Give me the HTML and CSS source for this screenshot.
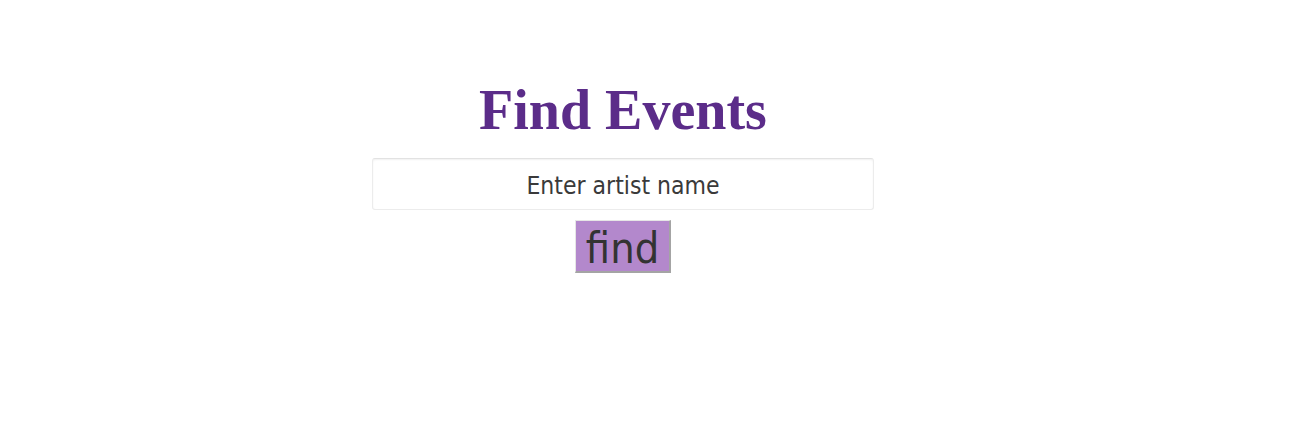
FILE: index.html
```html
<!DOCTYPE html>
<html lang="en">
<head>
<meta charset="utf-8">
<title>Find Events</title>
<link rel="stylesheet" href="styles.css">
</head>
<body>
<main class="page">
  <h1 class="title">Find Events</h1>
  <form class="search">
    <input class="artist" type="text" placeholder="Enter artist name">
    <button class="find" type="button">find</button>
  </form>
</main>
</body>
</html>
```
FILE: styles.css
```css
html, body {
  margin: 0;
  padding: 0;
  background: #ffffff;
}

.page {
  width: 1246px;
  display: flex;
  flex-direction: column;
  align-items: center;
  padding-top: 78px;
}

.title {
  margin: 0;
  font-family: "Liberation Serif", serif;
  font-weight: bold;
  font-size: 56px;
  line-height: 64px;
  color: #5b2c89;
}

.search {
  margin-top: 16px;
  display: flex;
  flex-direction: column;
  align-items: center;
  gap: 10px;
}

.artist {
  box-sizing: border-box;
  width: 502px;
  height: 52px;
  margin: 0;
  padding: 2px 10px 0;
  border: 1px solid #ececec;
  border-top-color: #e2e2e2;
  border-radius: 3px;
  box-shadow: inset 0 1px 2px rgba(0, 0, 0, 0.06);
  background: #ffffff;
  font-family: "DejaVu Sans Condensed", "DejaVu Sans", sans-serif;
  font-size: 24.5px;
  color: #333333;
  text-align: center;
  outline: none;
}

.artist::placeholder {
  color: #3a3a3a;
  opacity: 1;
}

.find {
  box-sizing: border-box;
  height: 53px;
  margin: 0;
  padding: 3px 10px 0 10px;
  border-style: solid;
  border-width: 1px 2px 2px 1px;
  border-color: #e6e6e6 #a4a4a4 #a4a4a4 #e6e6e6;
  background: #b388cc;
  font-family: "DejaVu Sans Condensed", "DejaVu Sans", sans-serif;
  font-size: 43px;
  line-height: 46px;
  color: #333333;
  cursor: pointer;
}
```
